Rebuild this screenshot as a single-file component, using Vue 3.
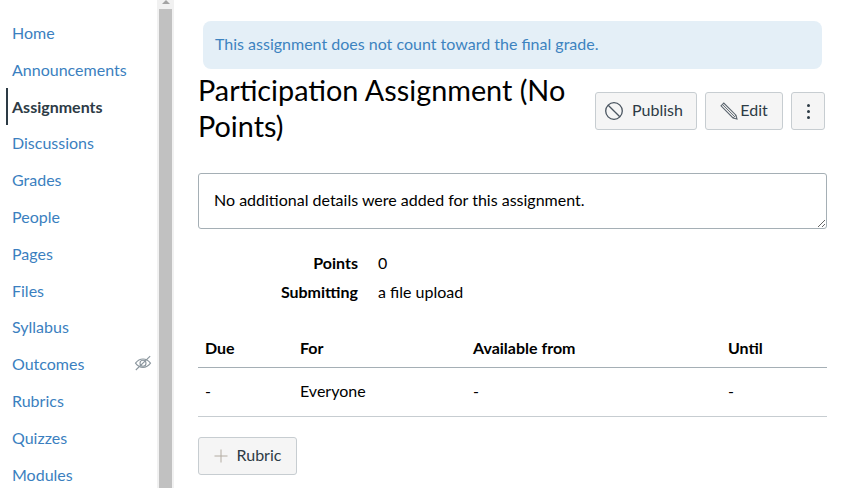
<template>
  <div class="page">
    <!-- Course navigation -->
    <nav class="sidebar">
      <a
        v-for="item in navItems"
        :key="item.label"
        class="nav-link"
        :class="{ active: item.active }"
      >
        <span>{{ item.label }}</span>
        <svg v-if="item.hidden" class="eye" viewBox="0 0 18 18" width="18" height="18" fill="none" stroke="#8b969e" stroke-width="1.1">
          <path d="M1.5 9.2C3.6 6.4 6.1 5 9 5s5.400 1.400 7.500 4.200C14.400 12 11.900 13.400 9 13.400S3.600 12 1.500 9.200z" />
          <circle cx="9" cy="9.200" r="3" />
          <path d="M1.800 16L16.200 2.200" />
        </svg>
      </a>
    </nav>

    <!-- Fake scrollbar of the nav pane -->
    <div class="scrollbar">
      <div class="arrow"></div>
      <div class="thumb"></div>
    </div>

    <main class="content">
      <div class="alert">This assignment does not count toward the final grade.</div>

      <header class="title-row">
        <h1>Participation Assignment (No Points)</h1>
        <div class="actions">
          <button class="btn publish">
            <svg class="icon" viewBox="0 0 20 20" width="20" height="20" fill="none" stroke="#4a5560" stroke-width="1.300">
              <circle cx="10" cy="10" r="8.300" />
              <path d="M4.200 4.200L15.800 15.800" />
            </svg>
            Publish
          </button>
          <button class="btn edit">
            <svg class="icon" viewBox="0 0 18 18" width="18" height="18" fill="none" stroke="#5c666f" stroke-width="1.100">
              <path d="M1 3.800L3.800 1L16 13.200L17 17L13 16z" fill="#ececec" />
              <path d="M2.500 2.500L14.500 14.500M13 16L16 13.200" stroke-width=".9" />
            </svg>
            Edit
          </button>
          <button class="btn more" aria-label="More">
            <span class="dot"></span>
            <span class="dot"></span>
            <span class="dot"></span>
          </button>
        </div>
      </header>

      <div class="details">No additional details were added for this assignment.</div>

      <dl class="facts">
        <template v-for="fact in facts" :key="fact.label">
          <dt>{{ fact.label }}</dt>
          <dd>{{ fact.value }}</dd>
        </template>
      </dl>

      <div class="dates">
        <div class="dates-row head">
          <span>Due</span><span>For</span><span>Available from</span><span>Until</span>
        </div>
        <div class="dates-row body">
          <span>-</span><span>Everyone</span><span>-</span><span>-</span>
        </div>
      </div>

      <button class="btn rubric">
        <svg class="icon" viewBox="0 0 14 14" width="14" height="14" fill="none" stroke="#b3aca2" stroke-width="1">
          <path d="M7 .5V13.500M.5 7H13.500" />
        </svg>
        Rubric
      </button>
    </main>
  </div>
</template>

<script setup>
const navItems = [
  { label: 'Home' },
  { label: 'Announcements' },
  { label: 'Assignments', active: true },
  { label: 'Discussions' },
  { label: 'Grades' },
  { label: 'People' },
  { label: 'Pages' },
  { label: 'Files' },
  { label: 'Syllabus' },
  { label: 'Outcomes', hidden: true },
  { label: 'Rubrics' },
  { label: 'Quizzes' },
  { label: 'Modules' },
]

const facts = [
  { label: 'Points', value: '0' },
  { label: 'Submitting', value: 'a file upload' },
]
</script>

<style>
html,
body {
  margin: 0;
  background: #fff;
}
</style>

<style scoped>
.page {
  display: flex;
  width: 852px;
  height: 488px;
  overflow: hidden;
  font-family: Lato, "Open Sans", sans-serif;
  font-size: 16px;
  color: #2d3b45;
  background: #fff;
}

/* ---- nav ---- */
.sidebar {
  flex: none;
  width: 157px;
  padding-top: 14.650px;
  box-sizing: border-box;
}

.nav-link {
  display: flex;
  align-items: center;
  justify-content: space-between;
  height: 36.800px;
  margin-left: 6px;
  padding: 0 5px 0 6px;
  box-sizing: border-box;
  color: #3b7fc0;
  line-height: 36px;
}

.nav-link.active {
  color: #2d3b45;
  font-weight: 700;
  box-shadow: inset 2px 0 0 #2d3b45;
}

.eye {
  margin-top: -2px;
}

/* ---- scrollbar ---- */
.scrollbar {
  flex: none;
  width: 17px;
  height: 100%;
  padding-left: 2px;
  box-sizing: border-box;
  background: #f1f1f1;
}

.arrow {
  width: 0;
  height: 0;
  margin: 0 0 5px 3px;
  border-left: 4px solid transparent;
  border-right: 4px solid transparent;
  border-bottom: 4px solid #a3a3a3;
}

.thumb {
  width: 13px;
  height: 100%;
  background: #c1c1c1;
}

/* ---- main column ---- */
.content {
  flex: none;
  width: 629px;
  margin-left: 24px;
  padding-top: 21px;
}

.alert {
  width: 619px;
  height: 48px;
  margin-left: 5px;
  padding-left: 12px;
  box-sizing: border-box;
  border-radius: 8px;
  background: #e4eff7;
  color: #3d83c0;
  font-size: 16px;
  line-height: 46px;
}

.title-row {
  display: flex;
  justify-content: space-between;
  align-items: flex-start;
  margin-top: 3px;
  height: 92px;
}

h1 {
  width: 390px;
  margin: 0;
  font-size: 28.800px;
  font-weight: 400;
  line-height: 36px;
  color: #000;
}

.actions {
  display: flex;
  gap: 8px;
  margin-top: 20px;
  margin-right: 2px;
}

.btn {
  display: inline-flex;
  align-items: center;
  justify-content: center;
  height: 38px;
  padding: 0 0 4px;
  border: 1px solid #c7cdd1;
  border-radius: 3px;
  background: #f5f5f5;
  color: #2d3b45;
  font-family: inherit;
  font-size: 16px;
}

.icon {
  margin-top: 4px;
}

.publish {
  gap: 8px;
  width: 102px;
  padding-right: 5px;
}

.edit {
  gap: 2px;
  width: 78px;
}

.more {
  flex-direction: column;
  gap: 3px;
  width: 34px;
  padding: 0;
}

.dot {
  width: 3px;
  height: 3px;
  border-radius: 50%;
  background: #2d3b45;
}

.details {
  height: 56px;
  padding: 16px 15px 0;
  box-sizing: border-box;
  overflow: auto;
  resize: vertical;
  border: 1px solid #a5afb5;
  border-radius: 3px;
  color: #000;
  font-size: 16px;
  line-height: 20px;
  margin-top: 9px;
}

.facts {
  display: grid;
  grid-template-columns: 160px 1fr;
  column-gap: 20px;
  row-gap: 9px;
  margin: 24px 0 0;
  line-height: 20px;
  color: #000;
}

dt {
  text-align: right;
  font-weight: 700;
}

dd {
  margin: 0;
}

.dates {
  margin-top: 26px;
  color: #000;
}

.dates-row {
  display: grid;
  grid-template-columns: 95px 173px 255px 1fr;
  align-items: center;
  height: 49px;
  padding-left: 7px;
  border-bottom: 1px solid #c7cdd1;
  box-sizing: border-box;
}

.dates-row.head {
  height: 40px;
  font-weight: 700;
  border-bottom-color: #a5afb5;
}

.dates-row.body {
  padding-bottom: 4px;
}

.rubric {
  gap: 9px;
  width: 99px;
  margin-top: 20px;
}
</style>
